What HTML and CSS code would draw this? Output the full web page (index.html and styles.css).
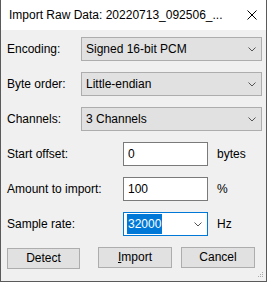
FILE: index.html
```html
<!DOCTYPE html>
<html lang="en">
<head>
    <meta charset="UTF-8">
    <title>Import Raw Data</title>
    <link rel="stylesheet" href="styles.css">
</head>
<body>
    <div class="window">
        <div class="titlebar">
            <span class="title">Import Raw Data: 20220713_092506_...</span>
            <svg class="close" width="10" height="10" viewBox="0 0 10 10">
                <path d="M0.5 0.5 L9.5 9.5 M9.5 0.5 L0.5 9.5" stroke="#000" stroke-width="1" fill="none"/>
            </svg>
        </div>
        <div class="content">
            <div class="row">
                <span class="label short">Encoding:</span>
                <div class="combo wide">
                    <span>Signed 16-bit PCM</span>
                    <svg class="arrow" width="8" height="5" viewBox="0 0 8 5"><path d="M0.5 0.5 L4 4 L7.5 0.5" stroke="#555" fill="none"/></svg>
                </div>
            </div>
            <div class="row">
                <span class="label short">Byte order:</span>
                <div class="combo wide">
                    <span>Little-endian</span>
                    <svg class="arrow" width="8" height="5" viewBox="0 0 8 5"><path d="M0.5 0.5 L4 4 L7.5 0.5" stroke="#555" fill="none"/></svg>
                </div>
            </div>
            <div class="row">
                <span class="label short">Channels:</span>
                <div class="combo wide">
                    <span>3 Channels</span>
                    <svg class="arrow" width="8" height="5" viewBox="0 0 8 5"><path d="M0.5 0.5 L4 4 L7.5 0.5" stroke="#555" fill="none"/></svg>
                </div>
            </div>
            <div class="row">
                <span class="label long">Start offset:</span>
                <div class="textbox">0</div>
                <span class="unit">bytes</span>
            </div>
            <div class="row">
                <span class="label long">Amount to import:</span>
                <div class="textbox">100</div>
                <span class="unit">%</span>
            </div>
            <div class="row">
                <span class="label long">Sample rate:</span>
                <div class="textbox edit-combo">
                    <span class="selected">32000</span>
                    <svg class="arrow" width="8" height="5" viewBox="0 0 8 5"><path d="M0.5 0.5 L4 4 L7.5 0.5" stroke="#555" fill="none"/></svg>
                </div>
                <span class="unit">Hz</span>
            </div>
            <div class="buttons">
                <div class="btn detect">Detect</div>
                <div class="btn import"><u>I</u>mport</div>
                <div class="btn cancel">Cancel</div>
            </div>
        </div>
        <svg class="grip" width="6" height="6" viewBox="0 0 6 6">
            <rect x="4" y="0" width="1" height="1" fill="#aaa"/>
            <rect x="2" y="2" width="1" height="1" fill="#aaa"/>
            <rect x="4" y="2" width="1" height="1" fill="#aaa"/>
            <rect x="0" y="4" width="1" height="1" fill="#aaa"/>
            <rect x="2" y="4" width="1" height="1" fill="#aaa"/>
            <rect x="4" y="4" width="1" height="1" fill="#aaa"/>
        </svg>
    </div>
</body>
</html>
```

FILE: styles.css
```css
body {
    margin: 0;
    padding: 0;
    font-family: 'Liberation Sans', Arial, sans-serif;
    font-size: 12px;
    color: #000;
    background-color: #f0f0f0;
}
.window {
    position: relative;
    width: 267px;
    height: 282px;
    box-sizing: border-box;
    border: 1px solid #5a5a5a;
    border-top: none;
    background-color: #f0f0f0;
}
.titlebar {
    height: 30px;
    background-color: #fff;
    display: flex;
    align-items: center;
    padding-left: 8px;
    padding-right: 9px;
}
.title {
    flex: 1;
    white-space: nowrap;
}
.close {
    display: block;
}
.content {
    padding: 7px 0 0 6px;
}
.row {
    display: flex;
    align-items: center;
    height: 24px;
    margin-bottom: 11px;
}
.label {
    flex: none;
}
.label.short {
    width: 74px;
}
.label.long {
    width: 116px;
}
.combo {
    box-sizing: border-box;
    height: 24px;
    background-color: #e1e1e1;
    border: 1px solid #adadad;
    display: flex;
    align-items: center;
    padding-left: 4px;
    padding-right: 5px;
}
.combo span {
    flex: 1;
}
.combo.wide {
    width: 181px;
}
.arrow {
    display: block;
}
.textbox {
    box-sizing: border-box;
    width: 85px;
    height: 24px;
    background-color: #fff;
    border: 1px solid #7a7a7a;
    display: flex;
    align-items: center;
    padding-left: 4px;
}
.edit-combo {
    border-color: #0078d7;
    padding-left: 3px;
    padding-right: 5px;
}
.edit-combo .selected {
    background-color: #0078d7;
    color: #fff;
    height: 20px;
    line-height: 20px;
    padding: 0 1px;
    margin-right: auto;
}
.unit {
    margin-left: 9px;
}
.buttons {
    display: flex;
    align-items: flex-start;
    margin-top: 2px;
}
.btn {
    box-sizing: border-box;
    width: 74px;
    height: 21px;
    background-color: #e1e1e1;
    border: 1px solid #adadad;
    text-align: center;
    line-height: 19px;
}
.btn.detect {
    width: 73px;
    margin-top: 1px;
}
.btn.import {
    margin-left: 18px;
}
.btn.cancel {
    margin-left: 9px;
}
.grip {
    position: absolute;
    right: 2px;
    bottom: 3px;
}
```
